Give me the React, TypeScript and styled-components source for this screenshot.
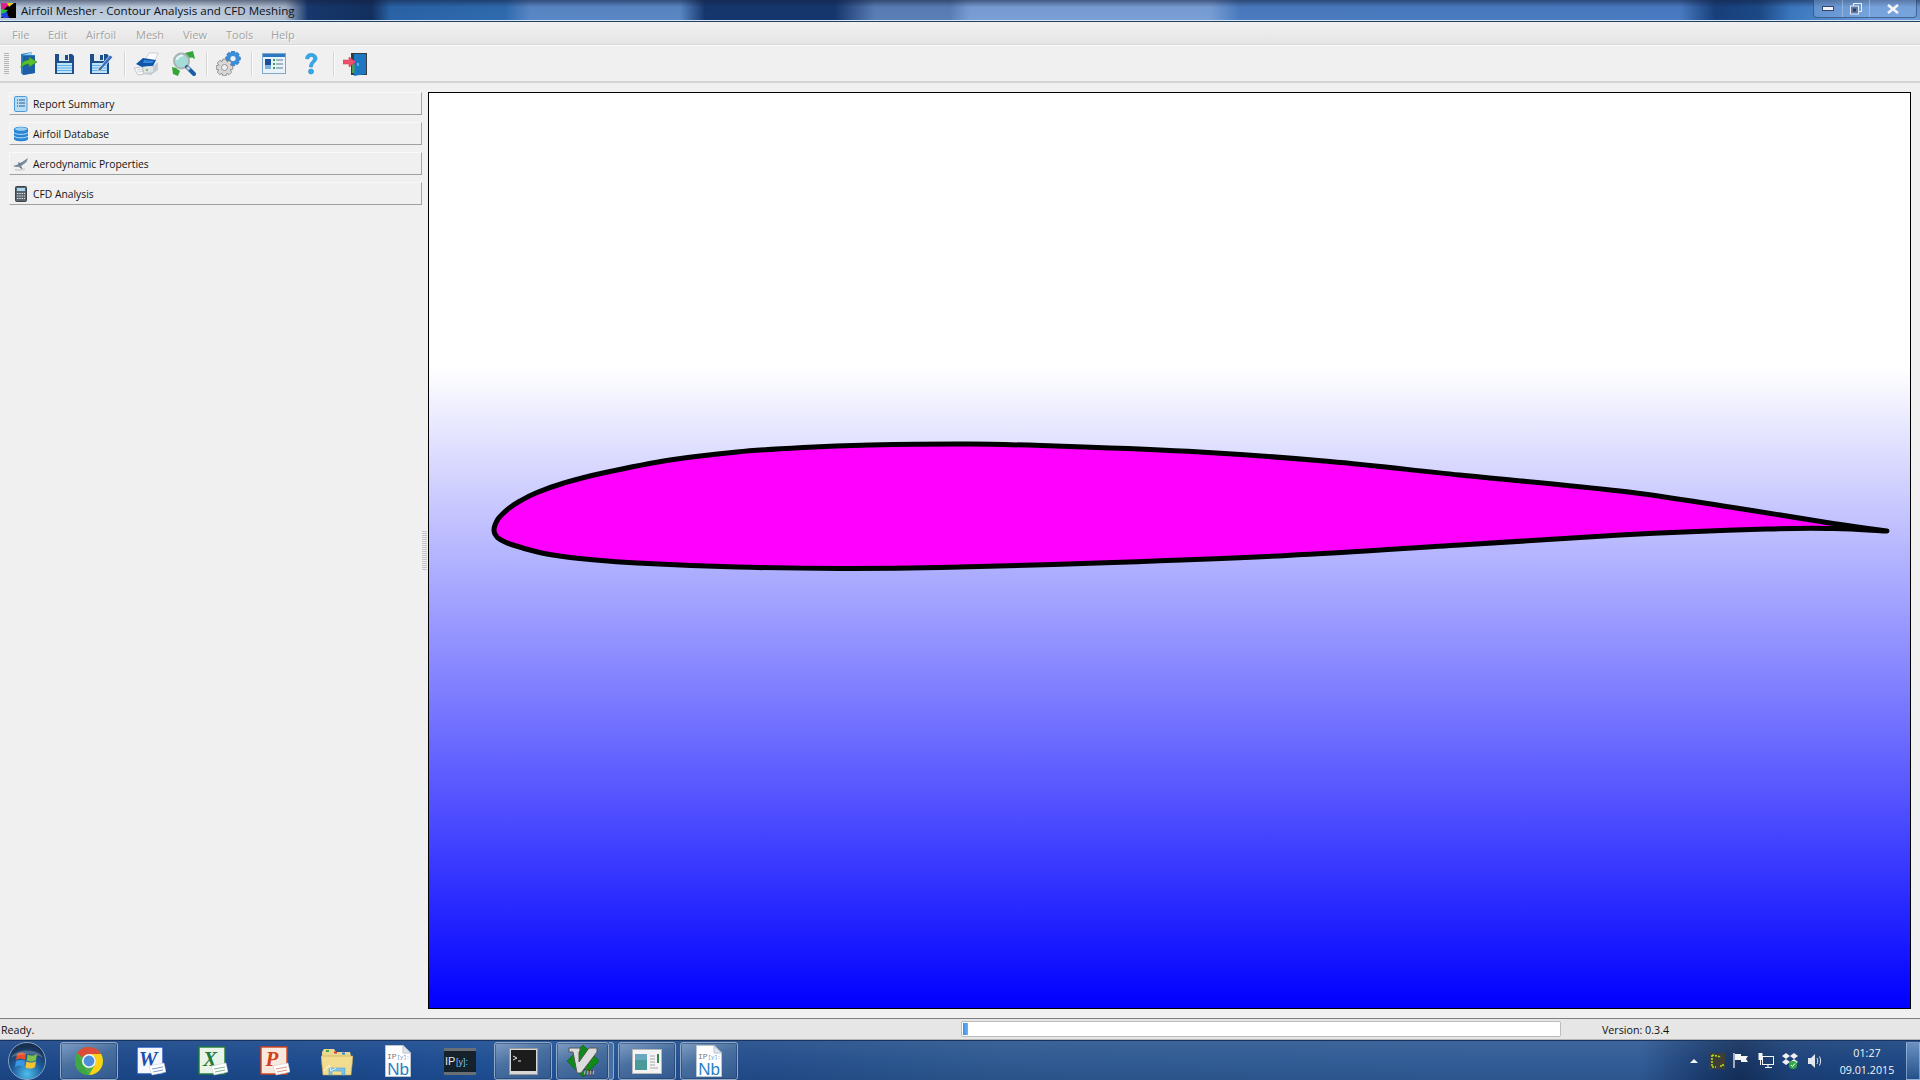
import React from 'react'
import styled, { createGlobalStyle } from 'styled-components'

const GlobalStyle = createGlobalStyle`
  html, body {
    margin: 0;
    padding: 0;
    background: #f0f0f0;
    overflow: hidden;
  }
  * {
    box-sizing: border-box;
  }
`

const Screen = styled.div`
  width: 1920px;
  height: 1080px;
  display: flex;
  flex-direction: column;
  font-family: 'Open Sans', 'Noto Sans', sans-serif;
  font-size: 11px;
  color: #101010;
  background: #f0f0f0;
`

const TitleBar = styled.div`
  height: 22px;
  flex: none;
  display: flex;
  align-items: flex-start;
  padding-left: 1px;
  border-bottom: 1px solid #24405f;
  box-shadow: inset 0 -1px 0 #d8e6f4;
  background:
    linear-gradient(180deg, rgba(20, 30, 60, 0.55) 0, rgba(20, 30, 60, 0.05) 7px, rgba(0, 0, 0, 0) 100%),
    linear-gradient(
      90deg,
      #b9c9dc 0,
      #c6d3e2 200px,
      #aab9cc 285px,
      #17386e 308px,
      #12305f 372px,
      #2a64a8 390px,
      #2f6cb0 505px,
      #5a88c8 530px,
      #5a88c6 680px,
      #15376f 705px,
      #15376f 835px,
      #5a80b8 875px,
      #5a80b8 950px,
      #7aa0d8 970px,
      #7aa0d8 1210px,
      #4a7cc0 1240px,
      #4a7cc4 1680px,
      #17407c 1715px,
      #1c4a88 1760px,
      #3a78c0 1790px,
      #6a9ad8 1870px,
      #6a9ad8 1920px
    );
`

const AppLogo = styled.svg`
  width: 15px;
  height: 15px;
  margin: 3px 5px 0 0;
  flex: none;
`

const WindowTitle = styled.span`
  font-size: 11.6px;
  line-height: 22px;
  color: #0b1220;
`

const WindowButtons = styled.div`
  margin-left: auto;
  margin-right: 3px;
  height: 18px;
  display: flex;
  border: 1px solid rgba(30, 50, 90, 0.55);
  border-top: none;
  border-radius: 0 0 4px 4px;
  background: rgba(150, 185, 235, 0.35);
`

const WindowButton = styled.div<{ $width: number }>`
  width: ${(p) => p.$width}px;
  display: flex;
  align-items: center;
  justify-content: center;
  border-left: 1px solid rgba(225, 235, 250, 0.35);
  &:first-child {
    border-left: none;
  }
`

const MenuBar = styled.div`
  height: 23px;
  flex: none;
  display: flex;
  align-items: center;
  padding: 2px 0 0 12px;
  background: linear-gradient(180deg, #f1f1f1, #e5e5e5);
  border-bottom: 1px solid #d9d9d9;
`

const MenuItem = styled.span<{ $width: number }>`
  width: ${(p) => p.$width}px;
  font-size: 11px;
  color: #a3a3a3;
  text-shadow: 1px 1px 0 #f8f8f8;
`

const ToolBar = styled.div`
  height: 38px;
  flex: none;
  display: flex;
  align-items: center;
  padding-left: 4px;
  background: #f0f0f0;
  border-top: 1px solid #fafafa;
  border-bottom: 2px solid #d3d3d3;
`

const ToolGrip = styled.div`
  width: 5px;
  height: 21px;
  background: repeating-linear-gradient(180deg, #b4b4b4 0, #b4b4b4 1px, #f0f0f0 1px, #f0f0f0 2px);
`

const ToolSlot = styled.div`
  width: 37px;
  height: 26px;
  display: flex;
  align-items: center;
  justify-content: center;
`

const ToolSeparator = styled.div`
  width: 8px;
  height: 24px;
  display: flex;
  justify-content: center;
  &::before {
    content: '';
    width: 1px;
    background: #d6d6d6;
    box-shadow: 1px 0 0 #fbfbfb;
  }
`

const Workspace = styled.div`
  flex: 1;
  min-height: 0;
  display: flex;
  align-items: stretch;
  padding: 9px 9px 9px 9px;
`

const SidePanel = styled.div`
  width: 413px;
  flex: none;
  display: flex;
  flex-direction: column;
  gap: 7px;
`

const SideItem = styled.div`
  height: 23px;
  display: flex;
  align-items: center;
  background: #f0f0f0;
  border-top: 1px solid #f9f9f9;
  border-left: 1px solid #f9f9f9;
  border-right: 1px solid #a4a4a4;
  border-bottom: 1px solid #a0a0a0;
`

const SideIconBox = styled.div`
  width: 23px;
  flex: none;
  display: flex;
  align-items: center;
  justify-content: center;
  padding-right: 2px;
`

const SideLabel = styled.span`
  font-size: 10.3px;
  color: #141414;
`

const Splitter = styled.div`
  width: 6px;
  flex: none;
  display: flex;
  align-items: center;
  justify-content: flex-start;
  &::before {
    content: '';
    width: 5px;
    height: 40px;
    background: repeating-linear-gradient(180deg, #c4c4c4 0, #c4c4c4 1px, #f0f0f0 1px, #f0f0f0 2px);
  }
`

const Canvas = styled.div`
  flex: 1;
  min-width: 0;
  border: 1px solid #000;
  background: linear-gradient(180deg, #ffffff 0, #ffffff 30%, #0000ff 100%);
`

const CanvasDrawing = styled.svg`
  display: block;
  width: 100%;
  height: 100%;
`

const StatusBar = styled.div`
  height: 22px;
  flex: none;
  display: flex;
  align-items: center;
  padding-left: 1px;
  background: #e6e6e6;
  border-top: 1px solid #808080;
  border-bottom: 1px solid #b8b8b8;
  font-size: 10.7px;
`

const StatusText = styled.span`
  width: 960px;
  flex: none;
  padding-top: 2px;
`

const ProgressTrack = styled.div`
  width: 600px;
  height: 16px;
  flex: none;
  background: #fff;
  border: 1px solid #bcbcbc;
  border-radius: 2px;
  padding: 1px;
`

const ProgressChunk = styled.div`
  width: 5px;
  height: 100%;
  background: linear-gradient(90deg, #3f8fe8, #6db1f5);
`

const VersionText = styled.span`
  margin-left: 41px;
  padding-top: 2px;
`

const TaskBar = styled.div`
  height: 40px;
  flex: none;
  display: flex;
  align-items: stretch;
  padding-top: 1px;
  border-top: 1px solid #16345f;
  background:
    linear-gradient(180deg, rgba(255, 255, 255, 0.07) 0, rgba(255, 255, 255, 0.02) 50%, rgba(0, 0, 0, 0.05) 100%),
    linear-gradient(
      90deg,
      #1b4687 0,
      #1b4a8e 400px,
      #1f5199 560px,
      #224c8a 760px,
      #2c578f 1000px,
      #2f5a95 1500px,
      #2f5a95 1640px,
      #1b3e72 1700px,
      #14305c 1740px,
      #1a4078 1790px,
      #1b4684 1920px
    );
`

const StartOrb = styled.div`
  width: 60px;
  flex: none;
  display: flex;
  align-items: center;
  justify-content: center;
  padding-right: 6px;
`

const TaskGroup = styled.div<{ $trailing: number }>`
  display: flex;
  gap: 3.9px;
  margin-right: ${(p) => p.$trailing}px;
`

const TaskButton = styled.div<{ $active?: boolean; $stacked?: boolean }>`
  position: relative;
  width: ${(p) => (p.$stacked ? 53 : 58)}px;
  margin-right: ${(p) => (p.$stacked ? 5 : 0)}px;
  height: 38px;
  display: flex;
  align-items: center;
  justify-content: center;
  border-radius: 3px;
  ${(p) =>
    p.$active
      ? `
    border: 1px solid #8fa9c9;
    box-shadow: inset 0 0 0 1px rgba(20, 40, 80, 0.4);
    background: linear-gradient(160deg, #7f9dc4 0, #486f9f 45%, #32598f 100%);
  `
      : ''}
  ${(p) =>
    p.$stacked
      ? `
    &::after {
      content: '';
      position: absolute;
      top: -1px;
      bottom: -1px;
      right: -6px;
      width: 4px;
      border: 1px solid #8fa9c9;
      border-left: none;
      border-radius: 0 3px 3px 0;
      background: #486f9f;
    }
  `
      : ''}
`

const Tray = styled.div`
  margin-left: auto;
  display: flex;
  align-items: center;
  gap: 8.5px;
`

const TrayArrow = styled.div`
  width: 0;
  height: 0;
  margin-right: 2.5px;
  border-left: 4px solid transparent;
  border-right: 4px solid transparent;
  border-bottom: 4px solid #f4f4f4;
`

const Clock = styled.div`
  width: 58px;
  margin-left: 7px;
  padding-top: 2px;
  text-align: center;
  font-size: 10.7px;
  line-height: 17px;
  color: #f2f6fb;
`

const ShowDesktop = styled.div`
  width: 14px;
  margin-left: 1.5px;
  align-self: stretch;
  border: 1px solid rgba(190, 215, 240, 0.5);
  background: linear-gradient(180deg, rgba(150, 185, 225, 0.6), rgba(50, 100, 160, 0.4));
`

// smooth line through the measured outline points
const smoothPath = (points: number[][]) => {
  let d = `M${points[0][0]} ${points[0][1]}`
  for (let i = 0; i < points.length - 1; i += 1) {
    const p0 = points[i - 1] || points[i]
    const p1 = points[i]
    const p2 = points[i + 1]
    const p3 = points[i + 2] || p2
    const c1x = p1[0] + (p2[0] - p0[0]) / 6
    const c1y = p1[1] + (p2[1] - p0[1]) / 6
    const c2x = p2[0] - (p3[0] - p1[0]) / 6
    const c2y = p2[1] - (p3[1] - p1[1]) / 6
    d += ` C${c1x.toFixed(1)} ${c1y.toFixed(1)} ${c2x.toFixed(1)} ${c2y.toFixed(1)} ${p2[0]} ${p2[1]}`
  }
  return d
}

const airfoilPoints = [
  [1887, 531],
  [1833, 523.5],
  [1733, 507.5],
  [1620, 491],
  [1460, 475],
  [1330, 461.5],
  [1200, 452],
  [1070, 446.5],
  [970, 444],
  [870, 445],
  [803, 447.5],
  [737, 452],
  [670, 460],
  [603, 473],
  [564, 483],
  [537, 492.5],
  [520, 501],
  [510, 507.5],
  [503, 513.5],
  [498, 519],
  [495, 525],
  [494, 530],
  [495, 534],
  [498, 538],
  [505, 542],
  [513, 545],
  [530, 550],
  [553, 555],
  [590, 559.5],
  [637, 563],
  [737, 567],
  [840, 568.5],
  [940, 567.5],
  [1113, 562.5],
  [1287, 555.5],
  [1460, 545],
  [1620, 535],
  [1767, 529],
  [1833, 528.5],
  [1887, 531],
]

const IconOpen = () => (
  <svg width="20" height="25" viewBox="0 0 20 25">
    <path d="M3 3 L14 1 V4 H17 V22 L5 24 L3 22Z" fill="#2a7fc4" />
    <path d="M5 5 H17 V22 L5 24Z" fill="#1c5fa6" />
    <path d="M14 1 V4 H5Z" fill="#9ad0f2" />
    <path d="M3 17 C3 11 7 9 11 9 V6 L19 11 L11 16 V13 C8 13 5 14 3 17Z" fill="#5cc02c" stroke="#2d8a1a" strokeWidth="0.6" />
  </svg>
)

const IconSave = () => (
  <svg width="21" height="22" viewBox="0 0 21 22">
    <path d="M1 1 H18 L20 3 V21 H1Z" fill="#1c4f8c" />
    <rect x="5" y="1" width="10" height="7" fill="#e6ebf0" />
    <rect x="11" y="2" width="3" height="5" fill="#1c4f8c" />
    <rect x="3" y="10" width="15" height="10" fill="#bfe2f6" />
    <path d="M3 12.5H18M3 15H18M3 17.5H18" stroke="#5fb0e6" strokeWidth="1" />
  </svg>
)

const IconSaveAs = () => (
  <svg width="25" height="23" viewBox="0 0 25 23">
    <path d="M1 2 H18 L20 4 V22 H1Z" fill="#1c4f8c" />
    <rect x="5" y="2" width="10" height="7" fill="#e6ebf0" />
    <rect x="11" y="3" width="3" height="5" fill="#1c4f8c" />
    <rect x="3" y="11" width="15" height="10" fill="#bfe2f6" />
    <path d="M3 13.5H18M3 16H18M3 18.5H18" stroke="#5fb0e6" strokeWidth="1" />
    <path d="M9 19 L11 15 L21 3 L24 5 L13 17Z" fill="#3a6fc0" stroke="#fff" strokeWidth="0.7" />
    <path d="M9 19 L11 15 L13 17Z" fill="#555" />
  </svg>
)

const IconPrint = () => (
  <svg width="25" height="24" viewBox="0 0 25 24">
    <path d="M11 8 L15 1 H24 L21 9Z" fill="#f8fafc" stroke="#b0b8c0" strokeWidth="0.6" />
    <path d="M2 12 L9 6 L22 8 L19 14 L8 15Z" fill="#0f55a8" />
    <path d="M10 8 L20 9 L18 11 L9 11Z" fill="#3a86d8" />
    <path d="M8 15 L19 14 L24 10 V18 L17 23 L9 22Z" fill="#c6ccd2" />
    <path d="M9 15 L19 14 V20 L10 21Z" fill="#dfe3e7" />
    <path d="M0 16 L8 15 L10 22 L4 23Z" fill="#fafafa" stroke="#a0a8b0" strokeWidth="0.6" />
    <path d="M3 18L8 17.5M4 20L9 19.5" stroke="#b8c0c8" strokeWidth="0.7" />
    <circle cx="13" cy="18" r="1" fill="#58c030" />
  </svg>
)

const IconSearch = () => (
  <svg width="25" height="25" viewBox="0 0 25 25">
    <path d="M14 2 L22 0 L24 8 L21 6.5 L17 7Z" fill="#35a53a" />
    <path d="M1 16 L5 17 L9 20 L7 25 L2 23Z" fill="#35a53a" />
    <circle cx="10.5" cy="10" r="7.5" fill="#a5dcd8" stroke="#a9b3b5" strokeWidth="2" />
    <path d="M5.5 9 C6 6.5 9 4.5 12 4.5" stroke="#e8f8f8" strokeWidth="2" fill="none" />
    <path d="M16 16 L23 23" stroke="#1b5ea8" strokeWidth="4" strokeLinecap="round" />
    <path d="M16 16 L18.5 18.5" stroke="#c8ccd0" strokeWidth="3" />
  </svg>
)

const gearPath = (cx: number, cy: number, r: number) => {
  let d = ''
  for (let i = 0; i < 8; i += 1) {
    const a = (i * Math.PI) / 4
    const da = 0.2
    const pt = (ang: number, rad: number) => `${(cx + Math.cos(ang) * rad).toFixed(1)} ${(cy + Math.sin(ang) * rad).toFixed(1)}`
    d += `${i === 0 ? 'M' : 'L'}${pt(a - 2 * da, r * 0.74)} L${pt(a - da, r)} L${pt(a + da, r)} L${pt(a + 2 * da, r * 0.74)} `
  }
  return `${d}Z`
}

const IconGears = () => (
  <svg width="25" height="25" viewBox="0 0 25 25">
    <path d={gearPath(17, 7.5, 7.5)} fill="#3a8fdc" stroke="#1e62a8" strokeWidth="0.5" />
    <circle cx="17" cy="7.5" r="2.6" fill="#f0f0f0" />
    <path d={gearPath(8.5, 16.5, 8.5)} fill="#d8d8d8" stroke="#6e6e6e" strokeWidth="0.7" />
    <circle cx="8.5" cy="16.5" r="3" fill="#f0f0f0" stroke="#777" strokeWidth="0.7" />
  </svg>
)

const IconList = () => (
  <svg width="24" height="21" viewBox="0 0 24 21">
    <rect x="0.5" y="0.5" width="23" height="20" fill="#e8f2fa" stroke="#7fa8c8" />
    <rect x="1" y="1" width="22" height="3" fill="#2a78c0" />
    <rect x="3" y="6" width="6" height="10" fill="#1c4f98" />
    <rect x="3" y="12" width="6" height="4" fill="#7fb0dc" />
    <rect x="11" y="6" width="2" height="2" fill="#3aa050" />
    <rect x="11" y="10" width="2" height="2" fill="#3aa050" />
    <rect x="11" y="14" width="2" height="2" fill="#3aa050" />
    <path d="M14 7H21M14 11H21M14 15H21" stroke="#5e7c94" strokeWidth="1" />
  </svg>
)

const IconHelp = () => (
  <svg width="16" height="23" viewBox="0 0 16 23">
    <path d="M2.5 6.5 C3 3 5 1.5 8 1.5 C11.5 1.5 14 3.5 14 6.5 C14 10 9.5 10.5 9.5 15 H6.5 C6.5 9.5 10.5 9 10.5 6.5 C10.5 5 9.5 4.5 8.2 4.5 C6.8 4.5 6 5.5 5.6 7Z" fill="#35a8ec" stroke="#1f86cc" strokeWidth="0.6" />
    <circle cx="8" cy="19.5" r="2.5" fill="#35a8ec" stroke="#1f86cc" strokeWidth="0.6" />
  </svg>
)

const IconExit = () => (
  <svg width="25" height="24" viewBox="0 0 25 24">
    <rect x="8" y="1" width="16" height="22" fill="#3a3a3a" />
    <path d="M11 2 H23 V22 L11 24Z" fill="#1d78c4" />
    <rect x="9" y="12" width="2.5" height="9" fill="#4aa050" />
    <rect x="14.5" y="11" width="1" height="3" fill="#b8e0f8" />
    <path d="M0 8 H6 V5 L13 10 L6 15 V12 H0Z" fill="#f0506a" stroke="#d03050" strokeWidth="0.5" />
  </svg>
)

const IconReport = () => (
  <svg width="14" height="16" viewBox="0 0 14 16">
    <rect x="0.5" y="0.5" width="12.5" height="15" rx="1.5" fill="#b8def6" stroke="#4d9ad6" />
    <path d="M5 4H11M5 7H11M5 10H11" stroke="#2a5a8a" strokeWidth="1" />
    <path d="M3 4H4M3 7H4M3 10H4" stroke="#1a3a6a" strokeWidth="1" />
  </svg>
)

const IconDatabase = () => (
  <svg width="14" height="16" viewBox="0 0 14 16">
    <path d="M0 3 C0 0 14 0 14 3 V13 C14 16 0 16 0 13Z" fill="#2a86d4" />
    <ellipse cx="7" cy="3" rx="6" ry="1.8" fill="#9ad0f4" />
    <path d="M0 6.5 C2 9 12 9 14 6.5M0 10 C2 12.5 12 12.5 14 10" stroke="#b8e0f8" strokeWidth="1" fill="none" />
  </svg>
)

const IconPlane = () => (
  <svg width="16" height="14" viewBox="0 0 16 14">
    <path d="M0 9 C3 8 6 7 9 5 L15 1 L13.5 5 L9 8.5 C6 10.5 3 10.5 0 9Z" fill="#7a8c9e" />
    <path d="M5 5 L8 6.5 L6 8Z M8 9 L10 13 L6 10Z" fill="#5c6e80" />
    <path d="M2 12.5 C5 13.5 9 13 12 12" stroke="#d0d0d0" strokeWidth="1.5" fill="none" />
  </svg>
)

const IconCalculator = () => (
  <svg width="12" height="16" viewBox="0 0 12 16">
    <rect x="0.5" y="0.5" width="11" height="15" rx="1" fill="#59636c" stroke="#3c4248" />
    <rect x="2" y="2" width="8" height="3" fill="#a8d8f0" />
    <path d="M2 7.5H10M2 10H10M2 12.5H10" stroke="#e8e8e8" strokeWidth="1.2" strokeDasharray="1.4 0.9" />
  </svg>
)

const IconChrome = () => (
  <svg width="28" height="28" viewBox="0 0 28 28">
    <circle cx="14" cy="14" r="14" fill="#4cb04a" />
    <path d="M14 0 A14 14 0 0 1 26.1 7 H14 A7 7 0 0 0 7.9 10.5 L2 6.2 A14 14 0 0 1 14 0Z" fill="#dd4b39" />
    <path d="M2 6.2 L8 17.5 L13.5 28 A14 14 0 0 1 2 6.2Z" fill="#3da843" />
    <path d="M26.1 7 A14 14 0 0 1 14 28 L20 17.5 A7 7 0 0 0 20 10 L14 7Z" fill="#fcd116" />
    <circle cx="14" cy="14" r="7" fill="#f4f4f4" />
    <circle cx="14" cy="14" r="5.4" fill="#4d8fdc" />
  </svg>
)

const OfficeIcon: React.FC<{ letter: string; color: string; paper: string }> = ({ letter, color, paper }) => (
  <svg width="30" height="30" viewBox="0 0 30 30">
    <rect x="1" y="1" width="26" height="27" fill={paper} stroke={color} strokeWidth="1.4" />
    <text x="12" y="20" fontSize="21" fontWeight="700" fontStyle="italic" fontFamily="Liberation Serif, serif" fill={color} textAnchor="middle">
      {letter}
    </text>
    <path d="M13 20 L28 17 L30 26 L16 29Z" fill="#fff" stroke="#c8c8c8" strokeWidth="0.5" />
    <path d="M16 23 L27 21M17 26 L27 24" stroke={color} strokeWidth="0.8" opacity="0.7" />
  </svg>
)

const IconFolder = () => (
  <svg width="32" height="29" viewBox="0 0 32 29">
    <path d="M1 5 L3 2 H13 L15 5 H29 L30 9 H1Z" fill="#e8d890" />
    <rect x="5" y="3" width="3" height="2" fill="#3ca840" />
    <rect x="13" y="4.5" width="3" height="2" fill="#d04030" />
    <rect x="21" y="5.5" width="3" height="2" fill="#3080d0" />
    <path d="M0 9 H32 L30 28 H2Z" fill="#f2dc90" stroke="#c8a850" strokeWidth="0.6" />
    <path d="M8 28 V21 H24 V28 H21 V24 H11 V28Z" fill="#7cc4ec" stroke="#4a94c8" strokeWidth="0.5" />
    <path d="M3 24 L8 18 L10 24 L15 21" stroke="#fff" strokeWidth="1" fill="none" opacity="0.8" />
  </svg>
)

const IconNotebook = () => (
  <svg width="26" height="32" viewBox="0 0 26 32">
    <path d="M0.5 0.5 H18 L25.5 8 V31.5 H0.5Z" fill="#fff" stroke="#b8c4d0" />
    <path d="M18 0.5 V8 H25.5Z" fill="#dfe6ee" stroke="#b8c4d0" />
    <text x="2" y="14" fontSize="8" fontFamily="Liberation Mono, monospace" fill="#777">IP</text>
    <text x="12" y="13.5" fontSize="5.2" fontFamily="Liberation Mono, monospace" fill="#4a8ac8">[y]:</text>
    <text x="13" y="29.5" fontSize="17" fontFamily="Liberation Sans, sans-serif" fill="#2b7fc4" textAnchor="middle">Nb</text>
  </svg>
)

const IconIPython = () => (
  <svg width="32" height="27" viewBox="0 0 32 27">
    <rect x="0" y="0" width="32" height="27" fill="#6a6f74" />
    <rect x="0" y="3" width="32" height="21" fill="#15222c" />
    <text x="1" y="17" fontSize="11" fontFamily="Liberation Sans, sans-serif" fill="#e8e8e8">IP</text>
    <text x="12" y="17" fontSize="9" fontFamily="Liberation Sans, sans-serif" fill="#7ec0ea">[y]:</text>
  </svg>
)

const IconTerminal = () => (
  <svg width="29" height="27" viewBox="0 0 29 27">
    <rect x="0.5" y="0.5" width="28" height="26" fill="#d8d8d8" stroke="#9a9a9a" />
    <rect x="2" y="2" width="25" height="21" fill="#1c1c1c" />
    <path d="M4 8 L8 10 L4 12" stroke="#e8e8e8" strokeWidth="1" fill="none" />
    <path d="M9 13H12" stroke="#e8e8e8" strokeWidth="1" />
  </svg>
)

const IconVim = () => (
  <svg width="32" height="32" viewBox="0 0 32 32">
    <path d="M16 0 L32 16 L16 32 L0 16Z" fill="#0f8a18" stroke="#0a5a10" strokeWidth="0.6" />
    <path d="M2 3 H13 V6 L12 7 V17 L22 3 H30 V7 L14 28 H10 L6 7 H2Z" fill="#dcdcdc" stroke="#555" strokeWidth="1" />
    <text x="22" y="30" fontSize="11" fontWeight="700" fontStyle="italic" fontFamily="Liberation Serif, serif" fill="#f0f0f0" stroke="#222" strokeWidth="0.5" textAnchor="middle">
      im
    </text>
  </svg>
)

const IconDocWindow = () => (
  <svg width="30" height="25" viewBox="0 0 30 25">
    <rect x="0.5" y="0.5" width="29" height="24" fill="#f4f4f4" stroke="#b8b8b8" />
    <rect x="3" y="5" width="12" height="16" fill="#4a9a9a" />
    <rect x="3" y="5" width="12" height="6" fill="#6aa8c0" />
    <path d="M18 7H23M18 10H23M18 13H23M18 16H23M18 19H26" stroke="#a8a8a8" strokeWidth="1" />
    <rect x="25" y="5" width="2" height="9" fill="#2a8a50" />
  </svg>
)

const IconWinOrb = () => (
  <svg width="38" height="38" viewBox="0 0 38 38">
    <defs>
      <radialGradient id="orbFill" cx="50%" cy="85%" r="75%">
        <stop offset="0" stopColor="#4fc0ee" />
        <stop offset="0.55" stopColor="#1c5a9a" />
        <stop offset="1" stopColor="#1a3050" />
      </radialGradient>
    </defs>
    <circle cx="19" cy="19" r="18.5" fill="url(#orbFill)" stroke="#aac8e0" strokeWidth="0.7" />
    <path d="M9 12 C12 10 15 10 18 12 L17 18 C14 16 11 16 8 18Z" fill="#e8502a" />
    <path d="M19.5 12.5 C22 14 26 14 29 12 L28 18 C25 20 22 20 18.7 18.5Z" fill="#7cc04a" />
    <path d="M8 19 C11 17.5 14 17.5 17 19 L16 25 C13 23 10 23 7 25Z" fill="#3a96e0" />
    <path d="M18.4 19.5 C21.5 21 25 21 28 19 L27 25 C24 27 21 27 17.5 25.5Z" fill="#f4c430" />
    <path d="M3 16 C6 6 32 6 35 16 C28 11 10 11 3 16Z" fill="#fff" opacity="0.22" />
  </svg>
)

const TrayApp = () => (
  <svg width="16" height="16" viewBox="0 0 16 16">
    <rect width="16" height="16" fill="#3e3e36" />
    <path d="M3 2 L12 4 M3 2 V14 M3 14 H7 M11 13 H14 V10" stroke="#a8e020" strokeWidth="1.6" strokeDasharray="2 1" fill="none" />
  </svg>
)

const TrayFlag = () => (
  <svg width="16" height="16" viewBox="0 0 16 16">
    <path d="M1 0V15" stroke="#fff" strokeWidth="1.2" />
    <path d="M2 1 H8 V3 H15 L13 6 L15 9 H8 V7 H2Z" fill="#f4f4f4" />
  </svg>
)

const TrayNetwork = () => (
  <svg width="16" height="16" viewBox="0 0 16 16">
    <rect x="4.5" y="3.5" width="11" height="8" fill="none" stroke="#f4f4f4" />
    <path d="M7 14.5H14M10 12V14" stroke="#f4f4f4" strokeWidth="1.2" />
    <rect x="0.5" y="0" width="4" height="7" fill="#f4f4f4" />
    <path d="M2.5 7V12" stroke="#f4f4f4" />
  </svg>
)

const TrayDropbox = () => (
  <svg width="16" height="16" viewBox="0 0 16 16">
    <path d="M4 0 L8 3 L4 6 L0 3Z M12 0 L16 3 L12 6 L8 3Z M4 6 L8 9 L4 12 L0 9Z M12 6 L16 9 L12 12 L8 9Z" fill="#f0f0f0" />
    <circle cx="11" cy="12" r="4" fill="#30a848" />
    <path d="M9 12 L10.5 13.5 L13 10.5" stroke="#fff" strokeWidth="1" fill="none" />
  </svg>
)

const TraySpeaker = () => (
  <svg width="16" height="16" viewBox="0 0 16 16">
    <path d="M1 5 H4 L8 1 V15 L4 11 H1Z" fill="#e4e8ec" />
    <path d="M10 5 C11 7 11 9 10 11M12.5 3.5 C14 6.5 14 9.5 12.5 12.5" stroke="#e4e8ec" strokeWidth="1" fill="none" />
  </svg>
)

const toolItems = [IconOpen, IconSave, IconSaveAs, null, IconPrint, IconSearch, null, IconGears, null, IconList, IconHelp, null, IconExit]

const menuItems: [string, number][] = [
  ['File', 36],
  ['Edit', 38],
  ['Airfoil', 50],
  ['Mesh', 47],
  ['View', 43],
  ['Tools', 45],
  ['Help', 40],
]

const sideItems: [string, React.FC][] = [
  ['Report Summary', IconReport],
  ['Airfoil Database', IconDatabase],
  ['Aerodynamic Properties', IconPlane],
  ['CFD Analysis', IconCalculator],
]

const App: React.FC = () => {
  return (
    <>
      <GlobalStyle />
      <Screen>
        <TitleBar>
          <AppLogo viewBox="0 0 15 15">
            <rect width="15" height="15" fill="#000" />
            <path d="M0 0 H10 L0 9Z" fill="#e0208a" />
            <path d="M0 6 L7 7 L0 15Z" fill="#20c040" />
            <path d="M0 11 L6 9 L8 15 H2Z" fill="#2040e0" />
            <path d="M6 0 H13 L8 4Z" fill="#e8d020" />
          </AppLogo>
          <WindowTitle>Airfoil Mesher - Contour Analysis and CFD Meshing</WindowTitle>
          <WindowButtons>
            <WindowButton $width={28}>
              <svg width="12" height="6" viewBox="0 0 12 6">
                <rect x="0.5" y="0.5" width="11" height="4" fill="#f2f4f8" stroke="#33476b" />
              </svg>
            </WindowButton>
            <WindowButton $width={27}>
              <svg width="12" height="12" viewBox="0 0 12 12">
                <rect x="3.5" y="0.5" width="8" height="8" fill="none" stroke="#e8ecf4" />
                <rect x="0.5" y="3" width="8" height="8" fill="#5a7aa8" stroke="#e8ecf4" />
                <rect x="3" y="5.5" width="3" height="3" fill="#2a3f66" />
              </svg>
            </WindowButton>
            <WindowButton $width={47}>
              <svg width="12" height="10" viewBox="0 0 12 10">
                <path d="M1 1 L11 9 M11 1 L1 9" stroke="#f2f4f8" strokeWidth="2.6" />
              </svg>
            </WindowButton>
          </WindowButtons>
        </TitleBar>

        <MenuBar>
          {menuItems.map(([label, width]) => (
            <MenuItem key={label} $width={width}>
              {label}
            </MenuItem>
          ))}
        </MenuBar>

        <ToolBar>
          <ToolGrip />
          {toolItems.map((Icon, i) =>
            Icon ? (
              <ToolSlot key={i}>
                <Icon />
              </ToolSlot>
            ) : (
              <ToolSeparator key={i} />
            )
          )}
        </ToolBar>

        <Workspace>
          <SidePanel>
            {sideItems.map(([label, Icon]) => (
              <SideItem key={label}>
                <SideIconBox>
                  <Icon />
                </SideIconBox>
                <SideLabel>{label}</SideLabel>
              </SideItem>
            ))}
          </SidePanel>
          <Splitter />
          <Canvas>
            <CanvasDrawing viewBox="429 93 1481 915" preserveAspectRatio="none">
              <path d={`${smoothPath(airfoilPoints)}Z`} fill="#ff00ff" stroke="#000" strokeWidth="5" strokeLinejoin="round" />
            </CanvasDrawing>
          </Canvas>
        </Workspace>

        <StatusBar>
          <StatusText>Ready.</StatusText>
          <ProgressTrack>
            <ProgressChunk />
          </ProgressTrack>
          <VersionText>Version: 0.3.4</VersionText>
        </StatusBar>

        <TaskBar>
          <StartOrb>
            <IconWinOrb />
          </StartOrb>
          <TaskGroup $trailing={5}>
            <TaskButton $active>
              <IconChrome />
            </TaskButton>
            <TaskButton>
              <OfficeIcon letter="W" color="#1a4fb0" paper="#f4f8fc" />
            </TaskButton>
            <TaskButton>
              <OfficeIcon letter="X" color="#1f7a3a" paper="#e8f4e8" />
            </TaskButton>
            <TaskButton>
              <OfficeIcon letter="P" color="#d0401a" paper="#fbe8dc" />
            </TaskButton>
            <TaskButton>
              <IconFolder />
            </TaskButton>
            <TaskButton>
              <IconNotebook />
            </TaskButton>
            <TaskButton>
              <IconIPython />
            </TaskButton>
          </TaskGroup>
          <TaskGroup $trailing={0}>
            <TaskButton $active>
              <IconTerminal />
            </TaskButton>
            <TaskButton $active $stacked>
              <IconVim />
            </TaskButton>
            <TaskButton $active>
              <IconDocWindow />
            </TaskButton>
            <TaskButton $active>
              <IconNotebook />
            </TaskButton>
          </TaskGroup>
          <Tray>
            <TrayArrow />
            <TrayApp />
            <TrayFlag />
            <TrayNetwork />
            <TrayDropbox />
            <TraySpeaker />
            <Clock>
              01:27
              <br />
              09.01.2015
            </Clock>
            <ShowDesktop />
          </Tray>
        </TaskBar>
      </Screen>
    </>
  )
}

export default App
